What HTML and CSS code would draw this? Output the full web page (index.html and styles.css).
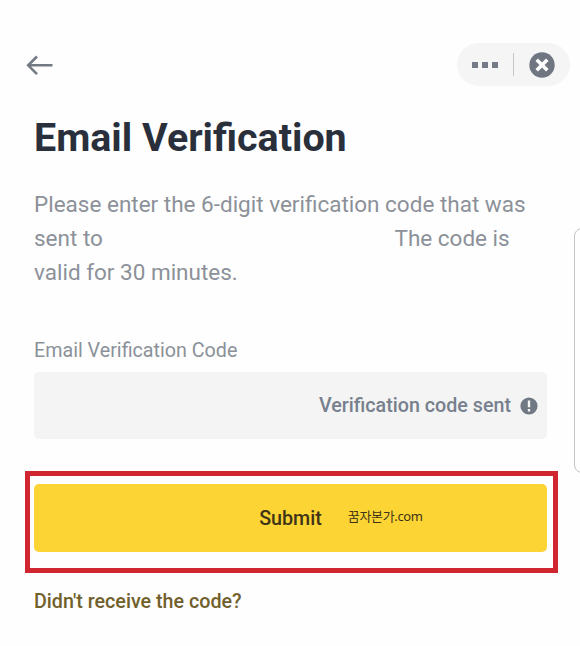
FILE: index.html
```
<!DOCTYPE html>
<html lang="en">
<head>
<meta charset="utf-8">
<meta name="viewport" content="width=device-width, initial-scale=1">
<title>Email Verification</title>
<link rel="stylesheet" href="styles.css">
</head>
<body>
<div class="page">
<main class="screen">
  <header class="topbar">
    <a href="#" class="back" aria-label="Back">
      <svg width="28" height="22" viewBox="0 0 28 22" fill="none" stroke="#737a82" stroke-width="2.6">
        <path d="M26.5 11.3H2.5M11 2.5L2.2 11.3l8.8 8.8"/>
      </svg>
    </a>
    <div class="controls">
      <svg class="dots" width="26" height="6" viewBox="0 0 26 6" fill="#747b87">
        <rect width="6" height="6"/>
        <rect x="10" width="6" height="6"/>
        <rect x="20" width="6" height="6"/>
      </svg>
      <span class="divider"></span>
      <svg width="26" height="26" viewBox="0 0 26 26">
        <circle cx="13" cy="13" r="12.7" fill="#6f7682"/>
        <path d="M7.7 7.7l10.6 10.6M18.3 7.7L7.7 18.3" stroke="#fff" stroke-width="3.6"/>
      </svg>
    </div>
  </header>

  <form class="content">
    <h1>Email Verification</h1>
    <p class="message">Please enter the 6-digit verification code that was<br>
      sent to <span class="address"></span>The code is<br>
      valid for 30 minutes.</p>

    <div class="label">Email Verification Code</div>
    <div class="field">
      <span class="status">Verification code sent</span>
      <svg width="18" height="18" viewBox="0 0 18 18">
        <circle cx="9" cy="9" r="8.6" fill="#707884"/>
        <path d="M9 3.5v6.7M9 12v2.5" stroke="#f4f4f4" stroke-width="2.4"/>
      </svg>
    </div>

    <div class="highlight">
      <button type="button" class="submit">
        <span class="submit-text">Submit</span>
        <span class="site">꿈자본가.com</span>
      </button>
    </div>

    <a href="#" class="resend">Didn't receive the code?</a>
  </form>
</main>
<aside class="side"></aside>
</div>
</body>
</html>
```

FILE: styles.css
```
* {box-sizing: border-box}

body {
  margin: 0;
  background: #fefefe;
  font-family: Roboto, "Liberation Sans", sans-serif;
}

.page {
  display: grid;
  grid-template-columns: 574px 6px;
  height: 646px;
  overflow: hidden;
}

.topbar {
  display: flex;
  justify-content: space-between;
  align-items: center;
  padding: 43px 4px 0 26px;
}

.back {
  display: flex;
}

.controls {
  display: flex;
  align-items: center;
  width: 113px;
  height: 43px;
  padding-left: 15px;
  border-radius: 22px;
  background: #f5f5f6;
}

.divider {
  width: 1px;
  height: 23px;
  margin: 0 15px;
  background: #c5c7ca;
}

.content {
  padding: 0 27px 0 34px;
}

h1 {
  margin: 28px 0 0;
  font-size: 39.4px;
  line-height: 48px;
  font-weight: 700;
  color: #2a303b;
  white-space: nowrap;
}

.message {
  margin: 25px 0 0;
  font-size: 22.5px;
  line-height: 34px;
  color: #8c9199;
  white-space: nowrap;
}

.address {
  display: inline-block;
  width: 286px;
}

.label {
  margin-top: 50px;
  font-size: 19.7px;
  line-height: 24px;
  color: #8a9199;
}

.field {
  display: flex;
  justify-content: flex-end;
  align-items: center;
  gap: 9px;
  height: 67px;
  margin-top: 9px;
  padding-right: 9px;
  border-radius: 5px;
  background: #f4f4f4;
}

.status {
  font-size: 19.7px;
  font-weight: 500;
  color: #77808d;
}

.highlight {
  width: 533px;
  height: 102px;
  margin: 32px 0 0 -9px;
  padding: 8px 4px;
  border: 5px solid #cf2630;
}

.submit {
  display: grid;
  grid-template-columns: 1fr auto 1fr;
  align-items: center;
  width: 513px;
  height: 68px;
  padding: 0;
  border: none;
  border-radius: 5px;
  background: #fcd434;
  font-family: inherit;
}

.submit-text {
  grid-column: 2;
  font-size: 19.7px;
  font-weight: 500;
  color: #3f3417;
}

.site {
  padding: 0 0 5px 26px;
  font-family: "Noto Sans", "Noto Sans CJK KR", sans-serif;
  font-size: 13px;
  letter-spacing: -0.35px;
  text-align: left;
  color: #3f3417;
}

.resend {
  display: block;
  margin-top: 17px;
  font-size: 19.7px;
  line-height: 24px;
  font-weight: 500;
  color: #71602c;
  text-decoration: none;
}

.side {
  width: 20px;
  height: 245px;
  margin-top: 228px;
  border: 1px solid #c4c4c4;
  border-radius: 8px;
}
```
